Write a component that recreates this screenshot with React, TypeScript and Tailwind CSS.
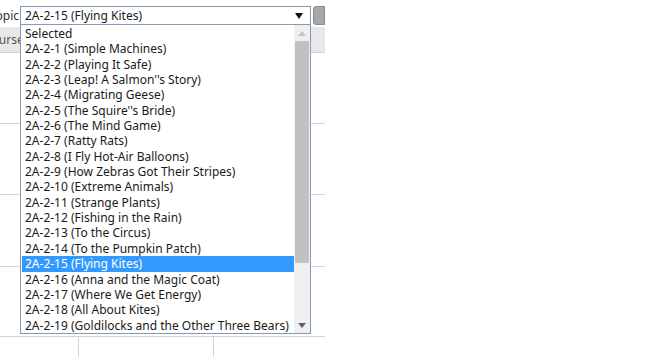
const topics = [
  "Selected",
  "2A-2-1 (Simple Machines)",
  "2A-2-2 (Playing It Safe)",
  "2A-2-3 (Leap! A Salmon''s Story)",
  "2A-2-4 (Migrating Geese)",
  "2A-2-5 (The Squire''s Bride)",
  "2A-2-6 (The Mind Game)",
  "2A-2-7 (Ratty Rats)",
  "2A-2-8 (I Fly Hot-Air Balloons)",
  "2A-2-9 (How Zebras Got Their Stripes)",
  "2A-2-10 (Extreme Animals)",
  "2A-2-11 (Strange Plants)",
  "2A-2-12 (Fishing in the Rain)",
  "2A-2-13 (To the Circus)",
  "2A-2-14 (To the Pumpkin Patch)",
  "2A-2-15 (Flying Kites)",
  "2A-2-16 (Anna and the Magic Coat)",
  "2A-2-17 (Where We Get Energy)",
  "2A-2-18 (All About Kites)",
  "2A-2-19 (Goldilocks and the Other Three Bears)",
];

const selected = "2A-2-15 (Flying Kites)";

const App = () => {
  return (
    <div
      className="relative w-[658px] h-[357px] overflow-hidden bg-white text-[12px] text-[#1a1a1a]"
      style={{ fontFamily: '"Noto Sans", "Open Sans", sans-serif' }}
    >
      <div className="w-[325px]">
        {/* toolbar */}
        <div className="flex items-center h-[27px] pt-[6px] pb-[2px]">
          <div className="w-[20px] flex justify-end overflow-hidden">
            <span className="shrink-0 pr-[1px] leading-[19px] text-[#333]">Topic</span>
          </div>
          <div className="flex items-center justify-between w-[291px] h-[19px] border border-[#7f9db9] bg-white pl-[4px] pr-[7px]">
            <span className="leading-[17px]">{selected}</span>
            <svg width="8" height="6" viewBox="0 0 8 6">
              <path d="M0 0 L8 0 L4 6 Z" fill="#111" />
            </svg>
          </div>
          <div className="ml-[2px] w-[12px] h-[19px] rounded-l-[3px] bg-[#a8a8a8] border border-[#8c8c8c]" />
        </div>

        {/* table */}
        <div className="h-[26px] bg-[#e8e8e8] border-b border-[#d4d4d4] flex items-center overflow-hidden">
          <span className="-ml-[16px] text-[#555]">Course</span>
        </div>
        <div className="h-[71px] border-b border-[#d4d4d4]" />
        <div className="h-[71px] border-b border-[#d4d4d4]" />
        <div className="h-[72px] border-b border-[#d4d4d4]" />
        <div className="h-[70px] border-b border-[#d4d4d4]" />
        <div className="grid grid-cols-[79px_135px_1fr] h-[30px]">
          <div className="border-r border-[#d4d4d4]" />
          <div className="border-r border-[#d4d4d4]" />
          <div />
        </div>
      </div>

      {/* open dropdown list */}
      <div className="absolute left-[20px] top-[24px] w-[291px] h-[310px] border border-[#7f9db9] bg-white flex">
        <div className="flex-1 min-w-0 pt-[1px] pl-[1px]">
          {topics.map((t) => (
            <div
              key={t}
              className={
                t === selected
                  ? "h-[15.35px] leading-[15px] pl-[3px] bg-[#3399ff] text-white whitespace-nowrap overflow-hidden"
                  : "h-[15.35px] leading-[15px] pl-[3px] whitespace-nowrap overflow-hidden"
              }
            >
              {t}
            </div>
          ))}
        </div>
        <div className="w-[16px] shrink-0 bg-[#f0f0f0] flex flex-col items-center">
          <div className="h-[16px] flex items-center justify-center">
            <svg width="8" height="5" viewBox="0 0 8 5">
              <path d="M0 5 L8 5 L4 0 Z" fill="#c4c4c4" />
            </svg>
          </div>
          <div className="w-[14px] h-[222px] bg-[#c1c1c1]" />
          <div className="flex-1" />
          <div className="h-[16px] flex items-center justify-center">
            <svg width="8" height="5" viewBox="0 0 8 5">
              <path d="M0 0 L8 0 L4 5 Z" fill="#606060" />
            </svg>
          </div>
        </div>
      </div>
    </div>
  );
};

export default App;
